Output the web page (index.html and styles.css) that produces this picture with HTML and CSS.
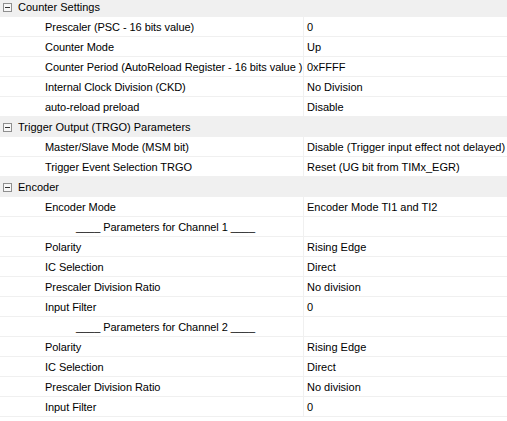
FILE: index.html
```html
<!DOCTYPE html>
<html lang="en">
<head>
  <meta charset="UTF-8">
  <title>Parameter Settings</title>
  <link rel="stylesheet" href="styles.css">
</head>
<body>
  <div class="tabla">
    <!-- Counter Settings -->
    <div class="grupo"><span class="caja"></span>Counter Settings</div>
    <div class="fila"><div class="nombre">Prescaler (PSC - 16 bits value)</div><div class="valor">0</div></div>
    <div class="fila"><div class="nombre">Counter Mode</div><div class="valor">Up</div></div>
    <div class="fila"><div class="nombre">Counter Period (AutoReload Register - 16 bits value )</div><div class="valor">0xFFFF</div></div>
    <div class="fila"><div class="nombre">Internal Clock Division (CKD)</div><div class="valor">No Division</div></div>
    <div class="fila"><div class="nombre">auto-reload preload</div><div class="valor">Disable</div></div>
    <!-- Trigger Output -->
    <div class="grupo"><span class="caja"></span>Trigger Output (TRGO) Parameters</div>
    <div class="fila"><div class="nombre">Master/Slave Mode (MSM bit)</div><div class="valor">Disable (Trigger input effect not delayed)</div></div>
    <div class="fila"><div class="nombre">Trigger Event Selection TRGO</div><div class="valor">Reset (UG bit from TIMx_EGR)</div></div>
    <!-- Encoder -->
    <div class="grupo"><span class="caja"></span>Encoder</div>
    <div class="fila"><div class="nombre">Encoder Mode</div><div class="valor">Encoder Mode TI1 and TI2</div></div>
    <div class="fila"><div class="nombre sub">____ Parameters for Channel 1 ____</div><div class="valor"></div></div>
    <div class="fila"><div class="nombre">Polarity</div><div class="valor">Rising Edge</div></div>
    <div class="fila"><div class="nombre">IC Selection</div><div class="valor">Direct</div></div>
    <div class="fila"><div class="nombre">Prescaler Division Ratio</div><div class="valor">No division</div></div>
    <div class="fila"><div class="nombre">Input Filter</div><div class="valor">0</div></div>
    <div class="fila"><div class="nombre sub">____ Parameters for Channel 2 ____</div><div class="valor"></div></div>
    <div class="fila"><div class="nombre">Polarity</div><div class="valor">Rising Edge</div></div>
    <div class="fila"><div class="nombre">IC Selection</div><div class="valor">Direct</div></div>
    <div class="fila"><div class="nombre">Prescaler Division Ratio</div><div class="valor">No division</div></div>
    <div class="fila"><div class="nombre">Input Filter</div><div class="valor">0</div></div>
  </div>
</body>
</html>
```

FILE: styles.css
```css
body {
  margin: 0;
  padding: 0;
  background-color: #fff;
  font-family: "Liberation Sans", Arial, sans-serif;
  font-size: 11px;
  color: #000;
}
.tabla {
  margin-top: -3px;
}
.grupo {
  height: 20px;
  background-color: #f0f0f0;
  display: flex;
  align-items: center;
  padding-left: 3px;
}
.caja {
  width: 7px;
  height: 7px;
  border: 1px solid #8f8f8f;
  margin-right: 6px;
  position: relative;
  background-color: #f7f7f7;
}
.caja::after {
  content: "";
  position: absolute;
  left: 1px;
  top: 3px;
  width: 5px;
  height: 1px;
  background-color: #333;
}
.fila {
  display: grid;
  grid-template-columns: 304px 1fr;
  height: 20px;
  border-bottom: 1px solid #f0f0f0;
  box-sizing: border-box;
}
.nombre {
  padding-left: 45px;
  border-right: 1px solid #f0f0f0;
  display: flex;
  align-items: center;
  white-space: nowrap;
  overflow: hidden;
  letter-spacing: -0.06px;
}
.nombre.sub {
  padding-left: 76px;
}
.valor {
  padding-left: 3px;
  display: flex;
  align-items: center;
  white-space: nowrap;
}
```
